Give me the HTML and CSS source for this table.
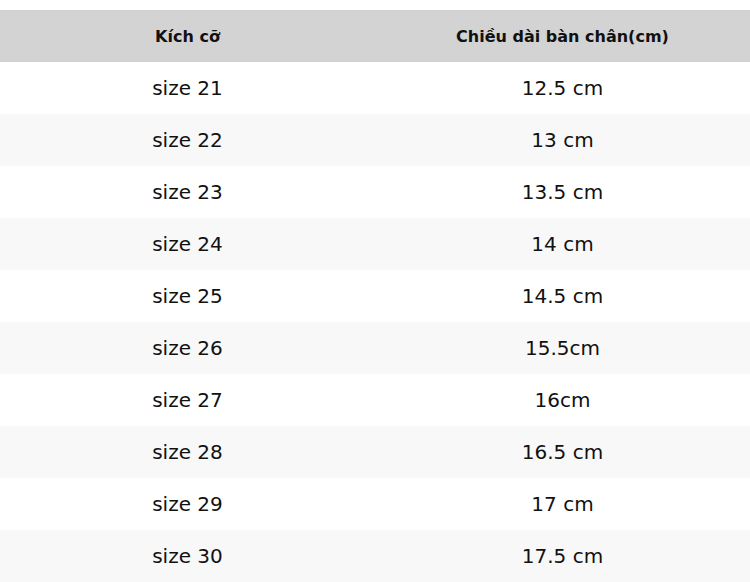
FILE: index.html
```html
<!DOCTYPE html>
<html lang="vi">
<head>
<meta charset="utf-8">
<link rel="stylesheet" href="styles.css">
</head>
<body>
<table class="size-table">
  <thead>
    <tr><th>Kích cỡ</th><th>Chiều dài bàn chân(cm)</th></tr>
  </thead>
  <tbody>
    <tr><td>size 21</td><td>12.5 cm</td></tr>
    <tr><td>size 22</td><td>13 cm</td></tr>
    <tr><td>size 23</td><td>13.5 cm</td></tr>
    <tr><td>size 24</td><td>14 cm</td></tr>
    <tr><td>size 25</td><td>14.5 cm</td></tr>
    <tr><td>size 26</td><td>15.5cm</td></tr>
    <tr><td>size 27</td><td>16cm</td></tr>
    <tr><td>size 28</td><td>16.5 cm</td></tr>
    <tr><td>size 29</td><td>17 cm</td></tr>
    <tr><td>size 30</td><td>17.5 cm</td></tr>
  </tbody>
</table>
</body>
</html>
```
FILE: styles.css
```css
html, body {
  margin: 0;
  padding: 0;
  background: #ffffff;
}
body {
  padding-top: 10px;
  font-family: "DejaVu Sans", sans-serif;
  color: #111111;
}
.size-table {
  width: 750px;
  border-collapse: collapse;
  table-layout: fixed;
}
.size-table th,
.size-table td {
  width: 50%;
  height: 52px;
  padding: 0;
  text-align: center;
  vertical-align: middle;
}
.size-table th {
  background: #d3d3d3;
  font-size: 16px;
  font-weight: bold;
  color: #111111;
}
.size-table td {
  font-size: 20px;
}
.size-table tbody tr:nth-child(even) {
  background: #f8f8f8;
}
```
